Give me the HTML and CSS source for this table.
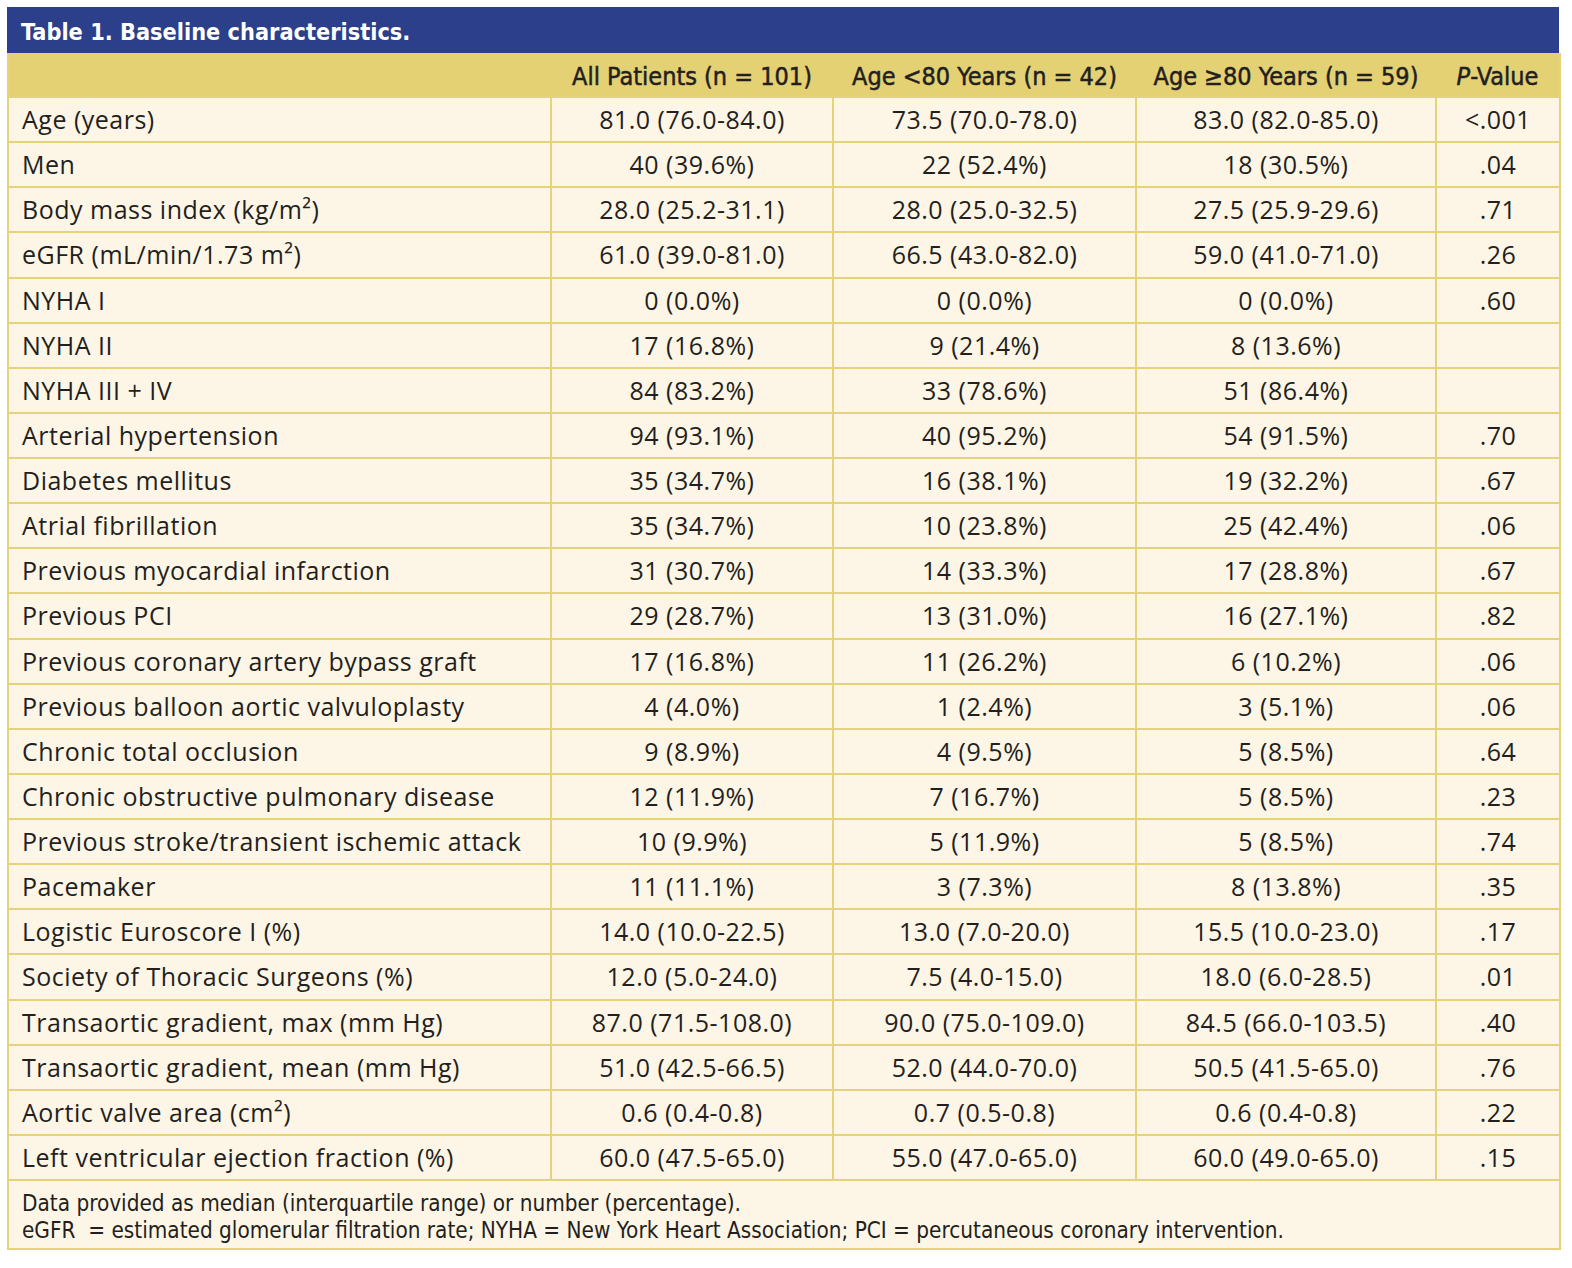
FILE: index.html
```html
<!DOCTYPE html>
<html>
<head>
<meta charset="utf-8">
<link rel="stylesheet" href="styles.css">
</head>
<body>
<div class="wrap">
  <div class="title">Table 1. Baseline characteristics.</div>
  <table class="tbl">
    <colgroup>
      <col class="c-label"><col class="c-all"><col class="c-young"><col class="c-old"><col class="c-p">
    </colgroup>
    <thead>
      <tr>
        <th></th>
        <th>All Patients (n = 101)</th>
        <th>Age &lt;80 Years (n = 42)</th>
        <th>Age ≥80 Years (n = 59)</th>
        <th><i>P</i>-Value</th>
      </tr>
    </thead>
    <tbody>
      <tr><td>Age (years)</td><td>81.0 (76.0-84.0)</td><td>73.5 (70.0-78.0)</td><td>83.0 (82.0-85.0)</td><td>&lt;.001</td></tr>
      <tr><td>Men</td><td>40 (39.6%)</td><td>22 (52.4%)</td><td>18 (30.5%)</td><td>.04</td></tr>
      <tr><td>Body mass index (kg/m²)</td><td>28.0 (25.2-31.1)</td><td>28.0 (25.0-32.5)</td><td>27.5 (25.9-29.6)</td><td>.71</td></tr>
      <tr><td>eGFR (mL/min/1.73 m²)</td><td>61.0 (39.0-81.0)</td><td>66.5 (43.0-82.0)</td><td>59.0 (41.0-71.0)</td><td>.26</td></tr>
      <tr><td>NYHA I</td><td>0 (0.0%)</td><td>0 (0.0%)</td><td>0 (0.0%)</td><td>.60</td></tr>
      <tr><td>NYHA II</td><td>17 (16.8%)</td><td>9 (21.4%)</td><td>8 (13.6%)</td><td></td></tr>
      <tr><td>NYHA III + IV</td><td>84 (83.2%)</td><td>33 (78.6%)</td><td>51 (86.4%)</td><td></td></tr>
      <tr><td>Arterial hypertension</td><td>94 (93.1%)</td><td>40 (95.2%)</td><td>54 (91.5%)</td><td>.70</td></tr>
      <tr><td>Diabetes mellitus</td><td>35 (34.7%)</td><td>16 (38.1%)</td><td>19 (32.2%)</td><td>.67</td></tr>
      <tr><td>Atrial fibrillation</td><td>35 (34.7%)</td><td>10 (23.8%)</td><td>25 (42.4%)</td><td>.06</td></tr>
      <tr><td>Previous myocardial infarction</td><td>31 (30.7%)</td><td>14 (33.3%)</td><td>17 (28.8%)</td><td>.67</td></tr>
      <tr><td>Previous PCI</td><td>29 (28.7%)</td><td>13 (31.0%)</td><td>16 (27.1%)</td><td>.82</td></tr>
      <tr><td>Previous coronary artery bypass graft</td><td>17 (16.8%)</td><td>11 (26.2%)</td><td>6 (10.2%)</td><td>.06</td></tr>
      <tr><td>Previous balloon aortic valvuloplasty</td><td>4 (4.0%)</td><td>1 (2.4%)</td><td>3 (5.1%)</td><td>.06</td></tr>
      <tr><td>Chronic total occlusion</td><td>9 (8.9%)</td><td>4 (9.5%)</td><td>5 (8.5%)</td><td>.64</td></tr>
      <tr><td>Chronic obstructive pulmonary disease</td><td>12 (11.9%)</td><td>7 (16.7%)</td><td>5 (8.5%)</td><td>.23</td></tr>
      <tr><td>Previous stroke/transient ischemic attack</td><td>10 (9.9%)</td><td>5 (11.9%)</td><td>5 (8.5%)</td><td>.74</td></tr>
      <tr><td>Pacemaker</td><td>11 (11.1%)</td><td>3 (7.3%)</td><td>8 (13.8%)</td><td>.35</td></tr>
      <tr><td>Logistic Euroscore I (%)</td><td>14.0 (10.0-22.5)</td><td>13.0 (7.0-20.0)</td><td>15.5 (10.0-23.0)</td><td>.17</td></tr>
      <tr><td>Society of Thoracic Surgeons (%)</td><td>12.0 (5.0-24.0)</td><td>7.5 (4.0-15.0)</td><td>18.0 (6.0-28.5)</td><td>.01</td></tr>
      <tr><td>Transaortic gradient, max (mm Hg)</td><td>87.0 (71.5-108.0)</td><td>90.0 (75.0-109.0)</td><td>84.5 (66.0-103.5)</td><td>.40</td></tr>
      <tr><td>Transaortic gradient, mean (mm Hg)</td><td>51.0 (42.5-66.5)</td><td>52.0 (44.0-70.0)</td><td>50.5 (41.5-65.0)</td><td>.76</td></tr>
      <tr><td>Aortic valve area (cm²)</td><td>0.6 (0.4-0.8)</td><td>0.7 (0.5-0.8)</td><td>0.6 (0.4-0.8)</td><td>.22</td></tr>
      <tr><td>Left ventricular ejection fraction (%)</td><td>60.0 (47.5-65.0)</td><td>55.0 (47.0-65.0)</td><td>60.0 (49.0-65.0)</td><td>.15</td></tr>
    </tbody>
    <tfoot>
      <tr>
        <td colspan="5">Data provided as median (interquartile range) or number (percentage).<br>eGFR&nbsp; = estimated glomerular filtration rate; NYHA = New York Heart Association; PCI = percutaneous coronary intervention.</td>
      </tr>
    </tfoot>
  </table>
</div>
</body>
</html>
```

FILE: styles.css
```css
html, body {
  margin: 0;
  padding: 0;
  background: #ffffff;
}
body {
  padding: 7px;
}
.wrap {
  width: 1552px;
}
.title {
  background: #2c3f8a;
  color: #ffffff;
  height: 46px;
  box-sizing: border-box;
  padding: 3px 0 0 14px;
  display: flex;
  align-items: center;
  font-family: "DejaVu Sans Condensed", "DejaVu Sans", sans-serif;
  font-stretch: condensed;
  font-weight: bold;
  font-size: 23.3px;
}
.tbl {
  width: 1552px;
  border-collapse: collapse;
  table-layout: fixed;
  background: #fdf6e6;
  color: #231f20;
  font-family: "Open Sans", "Noto Sans", sans-serif;
  font-size: 25px;
  letter-spacing: 0.5px;
  border: 2px solid #e6d27a;
  border-top: none;
}
.c-label { width: 543px; }
.c-all { width: 282px; }
.c-young { width: 303px; }
.c-old { width: 300px; }
.c-p { width: 124px; }
.tbl thead th {
  background: #e4d174;
  height: 44px;
  padding: 3px 0 0;
  box-sizing: border-box;
  font-family: "DejaVu Sans Condensed", "DejaVu Sans", sans-serif;
  font-stretch: condensed;
  font-weight: normal;
  -webkit-text-stroke: 0.5px #231f20;
  letter-spacing: 0;
  font-size: 25px;
  color: #231f20;
  text-align: center;
  white-space: nowrap;
  border: none;
  border-bottom: 2px solid #e6d27a;
}
.tbl tbody td {
  height: 41px;
  padding: 0 0 2px;
  text-align: center;
  border: 2px solid #e6d27a;
  white-space: nowrap;
}
.tbl tbody tr:nth-child(8n+4) td {
  height: 42px;
}
.tbl tbody td:first-child {
  text-align: left;
  padding-left: 13px;
}
.tbl tfoot td {
  height: 69px;
  padding: 8px 13px 4px;
  box-sizing: border-box;
  font-family: "DejaVu Sans Condensed", "DejaVu Sans", sans-serif;
  font-stretch: condensed;
  font-size: 22.35px;
  letter-spacing: 0;
  line-height: 27px;
  border: 2px solid #e6d27a;
  text-align: left;
}
```
